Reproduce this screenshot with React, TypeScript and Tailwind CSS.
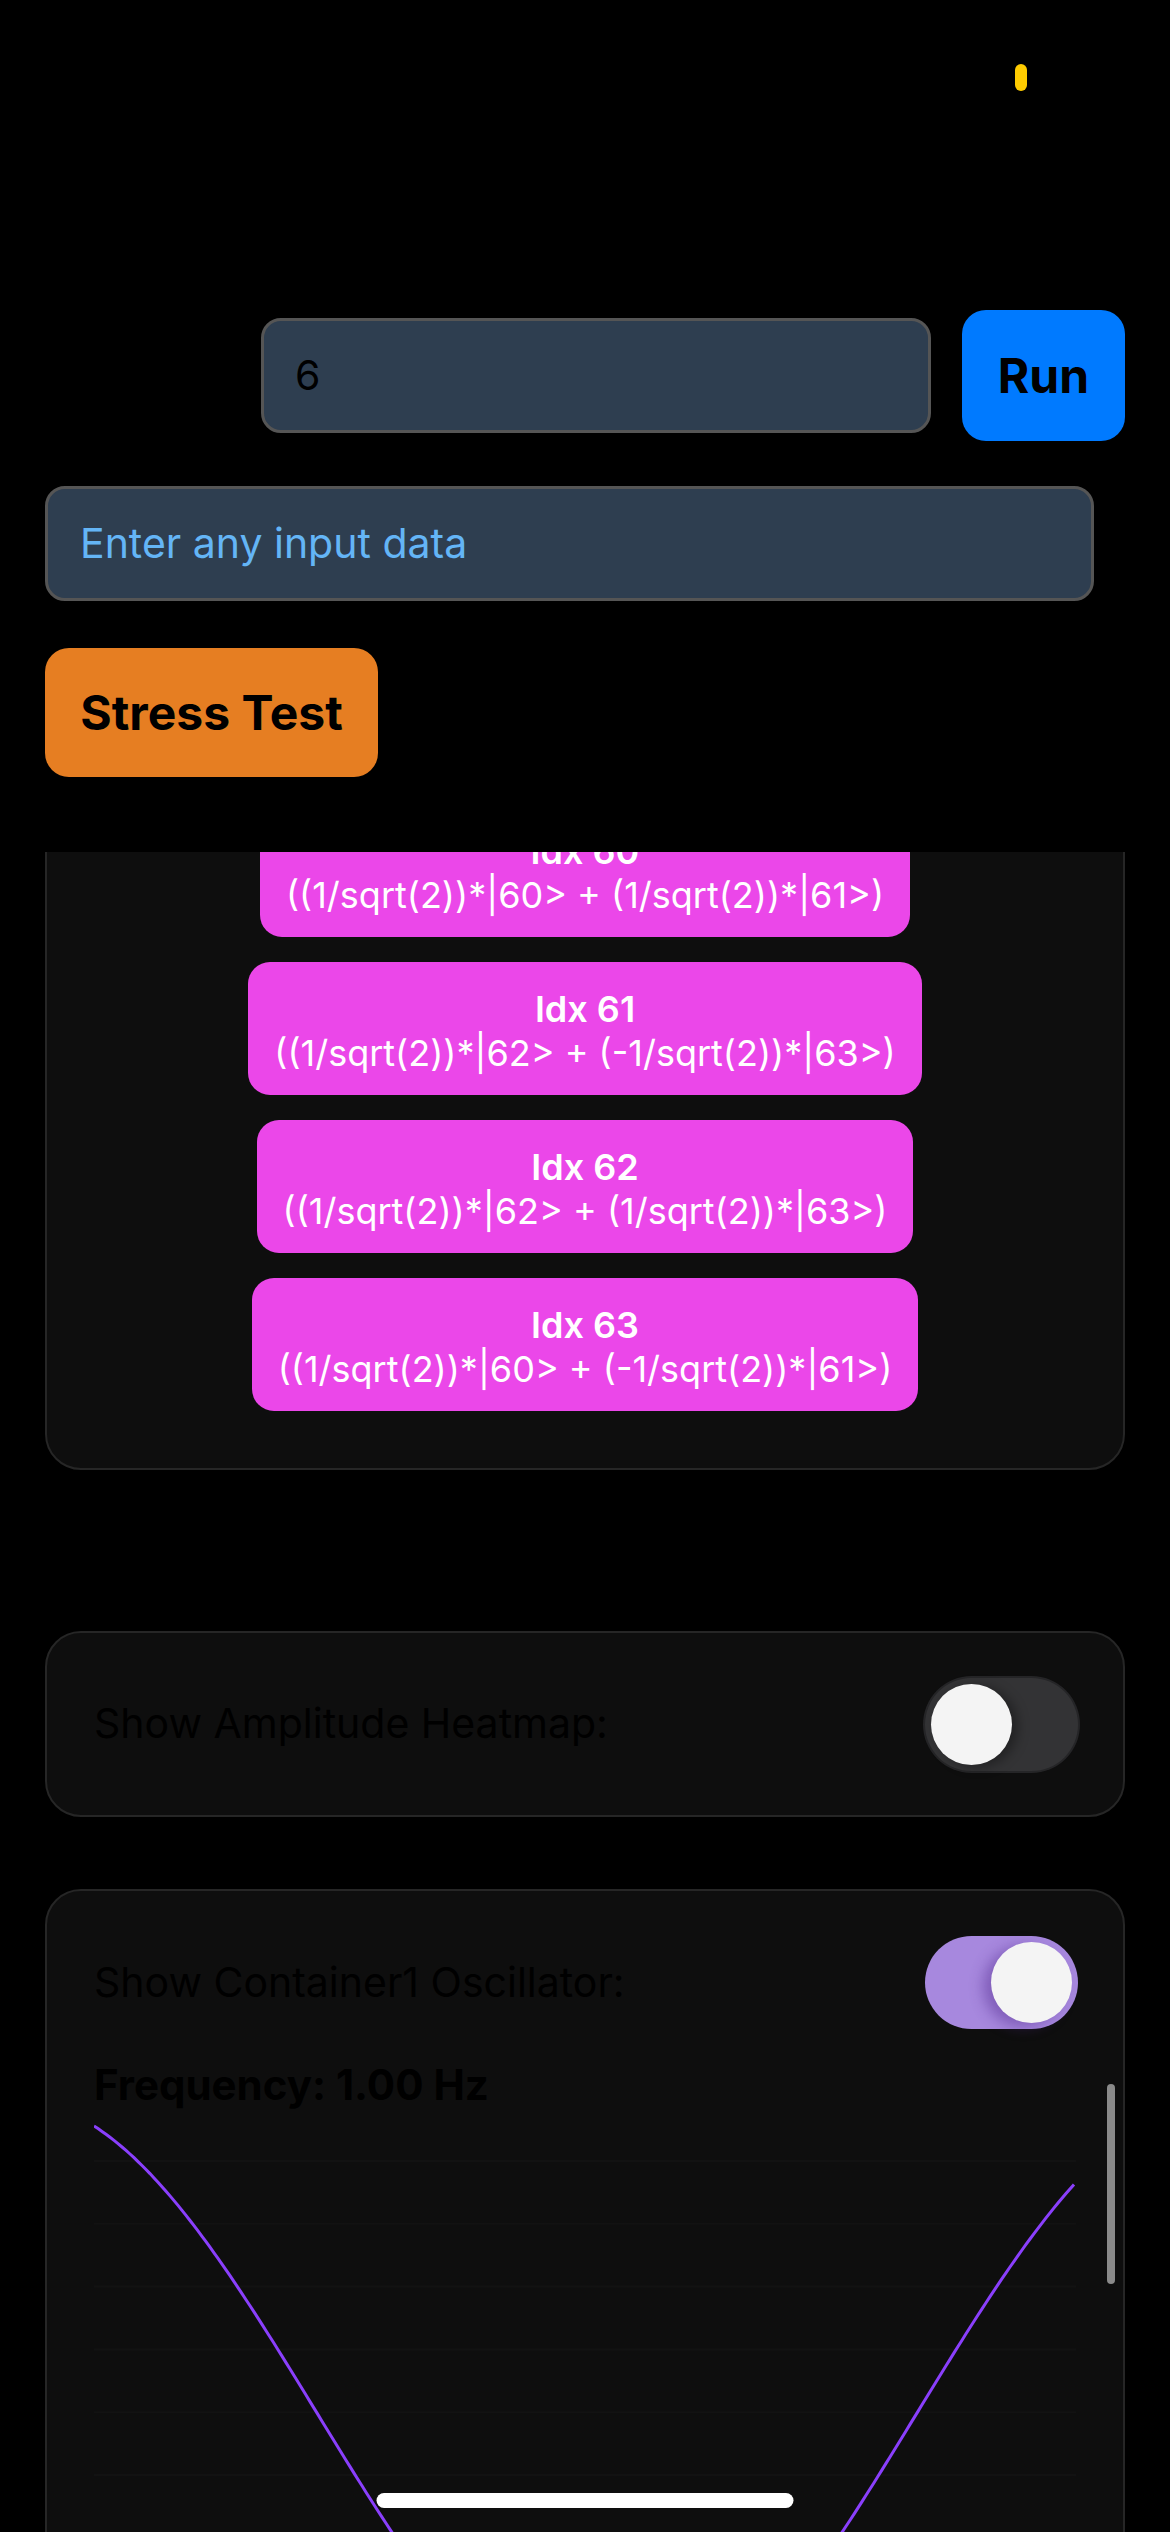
import React from "react";

const font = { fontFamily: "Inter, 'Noto Sans', sans-serif" };

const states = [
  { idx: 60, amp: "((1/sqrt(2))*|60> + (1/sqrt(2))*|61>)" },
  { idx: 61, amp: "((1/sqrt(2))*|62> + (-1/sqrt(2))*|63>)" },
  { idx: 62, amp: "((1/sqrt(2))*|62> + (1/sqrt(2))*|63>)" },
  { idx: 63, amp: "((1/sqrt(2))*|60> + (-1/sqrt(2))*|61>)" },
];

function Toggle({ on }: { on: boolean }) {
  return (
    <div
      className={
        "relative w-[153px] h-[93px] rounded-full shrink-0 " +
        (on ? "bg-[#a788de]" : "bg-[#333335] ring-2 ring-[#252527]")
      }
    >
      <div
        className={
          "absolute top-[6px] w-[81px] h-[81px] rounded-full bg-[#f4f4f4] " +
          (on
            ? "right-[6px] shadow-[-8px_4px_14px_rgba(80,40,140,0.45)]"
            : "left-[6px] shadow-[6px_2px_12px_rgba(0,0,0,0.35)]")
        }
      />
    </div>
  );
}

function Oscillator() {
  // wave sampled across the plot width, trough near the middle
  const w = 982;
  const h = 520;
  const pts: string[] = [];
  for (let x = 0; x <= w; x += 4) {
    const y = 309 + 312 * Math.cos((2 * Math.PI * (x + 94 - 617)) / 1200);
    pts.push(`${x === 0 ? "M" : "L"}${x},${y.toFixed(1)}`);
  }
  const grid = [57, 119.8, 182.6, 245.4, 308.2, 371, 433.8, 496.6];
  return (
    <svg width={w} height={h} className="block">
      {grid.map((g) => (
        <line key={g} x1={0} x2={w} y1={g} y2={g} stroke="#121212" strokeWidth={2} />
      ))}
      <path d={pts.join(" ")} fill="none" stroke="#8a3ffc" strokeWidth={3} />
    </svg>
  );
}

export default function App() {
  return (
    <div
      className="relative w-[1170px] h-[2532px] bg-black overflow-hidden flex flex-col"
      style={font}
    >
      {/* status dot */}
      <div className="absolute left-[1015px] top-[64px] w-[12px] h-[27px] rounded-full bg-[#ffcc00]" />

      <div className="pt-[310px] px-[45px] flex justify-end items-center gap-[31px]">
        <div className="w-[670px] h-[115px] rounded-[20px] bg-[#2e3e50] border-[3px] border-[#555555] flex items-center px-[31px] text-[41px] text-black">
          6
        </div>
        <button className="w-[163px] h-[131px] rounded-[24px] bg-[#007aff] text-black text-[48px] font-bold">
          Run
        </button>
      </div>

      <div className="mt-[45px] ml-[45px] w-[1049px] h-[115px] rounded-[20px] bg-[#2e3e50] border-[3px] border-[#555555] flex items-center px-[32px] text-[41px] text-[#64b5f6]">
        Enter any input data
      </div>

      <button className="mt-[47px] ml-[45px] w-[333px] h-[129px] rounded-[24px] bg-[#e67e22] text-black text-[48px] font-bold">
        Stress Test
      </button>

      <div className="mt-[75px] flex-1 overflow-hidden">
        <div className="-mt-[74px] px-[45px]">
          <div className="rounded-[36px] border-2 border-[#262626] bg-[#0e0e0e] pt-[24px] pb-[57px] flex flex-col items-center gap-[25px]">
            {states.map((s) => (
              <div
                key={s.idx}
                className="h-[133px] rounded-[22px] bg-[#eb47e9] px-[26px] pt-[25px] text-white text-center text-[36px] leading-[44px]"
              >
                <div className="font-semibold">Idx {s.idx}</div>
                <div>{s.amp}</div>
              </div>
            ))}
          </div>

          <div className="mt-[161px] h-[186px] rounded-[36px] border-2 border-[#262626] bg-[#0e0e0e] flex items-center justify-between pl-[47px] pr-[45px]">
            <span className="text-[41px] text-black">Show Amplitude Heatmap:</span>
            <Toggle on={false} />
          </div>

          <div className="mt-[72px] rounded-[36px] border-2 border-[#262626] bg-[#0e0e0e] pt-[45px] pl-[47px] pr-[45px] pb-[40px]">
            <div className="flex items-center justify-between">
              <span className="text-[41px] text-black">Show Container1 Oscillator:</span>
              <Toggle on={true} />
            </div>
            <div className="mt-[37px] text-[42px] leading-[38px] font-bold text-black">
              Frequency: 1.00 Hz
            </div>
            <Oscillator />
          </div>
        </div>
      </div>

      {/* scroll indicator */}
      <div className="absolute left-[1107px] top-[2084px] w-[8px] h-[200px] rounded-full bg-[#8a8a8a]" />
      {/* home indicator */}
      <div className="absolute bottom-[24px] left-1/2 -translate-x-1/2 w-[417px] h-[15px] rounded-full bg-white" />
    </div>
  );
}
